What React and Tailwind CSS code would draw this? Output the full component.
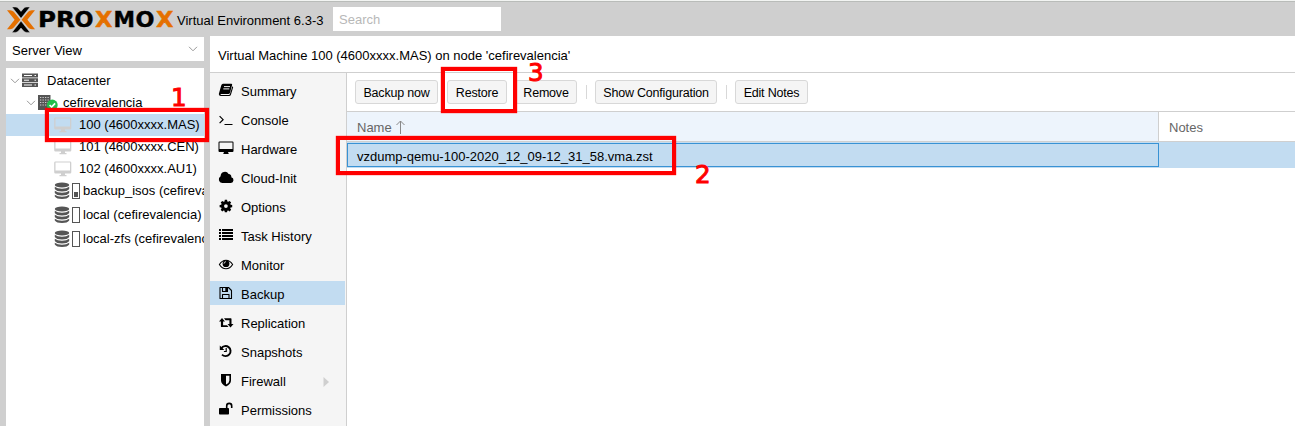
import React from "react";

function Glyph({ children, className = "" }) {
  return (
    <svg viewBox="0 0 16 14" className={"h-3.5 w-4 shrink-0 overflow-visible " + className} fill="currentColor">
      {children}
    </svg>
  );
}

const icons = {
  book: (
    <Glyph>
      <path d="M5 .8h8.200q1.300 0 .9 1.300L12 9.800q-.4 1.200-1.600 1.200H3.300q-.8 0-.8.5 0 .6.9.6h7.400q.8 0 1.100-.8L14.300 3.600l.5-.2q.5.5.3 1.200L13 11.600q-.5 1.500-2 1.500H3.100Q1.300 13.100.9 11.400q-.2-.8.2-1.500L3.200 2.600q.5-1.800 1.800-1.800z" />
      <path d="M6 3.600h6M5.300 5.900h6" stroke="#f5f5f5" strokeWidth="1" />
    </Glyph>
  ),
  console: (
    <Glyph>
      <path d="M1.600 4.200l3.500 3.500-3.500 3.500M6.500 12.500h8" fill="none" stroke="currentColor" strokeWidth="1.200" />
    </Glyph>
  ),
  hardware: (
    <svg viewBox="0 0 16 14" className="h-3.5 w-4 shrink-0" fill="currentColor">
      <path
        fillRule="evenodd"
        d="M1.500 .500h13q1 0 1 1v8.500q0 1-1 1H10l.8 2H5.200L6 11H1.500q-1 0-1-1V1.500q0-1 1-1zM1.500 1.500v6.500h13V1.500z"
      />
    </svg>
  ),
  cloud: (
    <Glyph>
      <path
        transform="translate(0 .7)"
        d="M4.200 12.200A3.600 3.600 0 0 1 2.600 5.500 4.300 4.300 0 0 1 10.600 3.300a2.600 2.600 0 0 1 2.700 3.200A2.900 2.900 0 0 1 12.900 12.200z"
      />
    </Glyph>
  ),
  gear: (
    <Glyph>
      <path
        fillRule="evenodd"
        d="M6.800.8h2.400l.3 1.700 1 .4 1.400-1 1.700 1.700-1 1.400.4 1 1.700.3v2.400l-1.700.3-.4 1 1 1.400-1.700 1.700-1.400-1-1 .4-.3 1.400H6.800l-.3-1.400-1-.4-1.400 1-1.700-1.700 1-1.400-.4-1-1.700-.3V6.300L3 6l.4-1-1-1.400L4.100 1.900l1.400 1 1-.4zM8 5.400a2 2 0 1 0 0 4 2 2 0 0 0 0-4z"
        transform="translate(.4 .1) scale(.94)"
      />
    </Glyph>
  ),
  list: (
    <Glyph>
      <path d="M1 1h2v2H1zM4 1h11v2H4zM1 4h2v2H1zM4 4h11v2H4zM1 7h2v2H1zM4 7h11v2H4zM1 10h2v2H1zM4 10h11v2H4z" />
    </Glyph>
  ),
  eye: (
    <Glyph>
      <g transform="translate(0 .5)">
        <path d="M1.400 7Q4 2.700 8 2.700T14.600 7Q12 11.300 8 11.300T1.400 7z" fill="none" stroke="currentColor" strokeWidth="1.100" />
        <circle cx="8" cy="6.200" r="3.400" />
        <path d="M6 6.200Q6 4.200 8 4.200" fill="none" stroke="#f5f5f5" strokeWidth=".8" />
      </g>
    </Glyph>
  ),
  floppy: (
    <Glyph>
      <path d="M2 1.500h8.500l3 3v8H2zM4.500 12.500V8.500h6.500V12.500M4.500 1.500v4h5v-4" fill="none" stroke="currentColor" strokeWidth="1.100" strokeLinejoin="round" />
      <path d="M7.300 2h1.700v3H7.300z" />
    </Glyph>
  ),
  retweet: (
    <Glyph>
      <path d="M4 3L7 6.500H5.100v3.700h3.900l1.500 1.900H3.500q-.6 0-.6-.6v-5H1zM12.500 12.600L9.500 9h1.900V5.200H7.500L6 3.300h6.900q.6 0 .6.600V9h2z" />
    </Glyph>
  ),
  history: (
    <Glyph>
      <g transform="translate(0 .6)">
        <path d="M3.400 3.700A5 5 0 1 1 4 10" fill="none" stroke="currentColor" strokeWidth="1.900" />
        <path d="M1.800.8v4.500h4.500zM7.600 3.500h1.200v4H5.900V6.300h1.700z" />
      </g>
    </Glyph>
  ),
  shield: (
    <Glyph>
      <path
        fillRule="evenodd"
        transform="translate(0 .6)"
        d="M3 .5h10v6.400q0 3.700-5 6-5-2.300-5-6zM8 2.200v8.800q3.400-1.900 3.400-4.200V2.200z"
      />
    </Glyph>
  ),
  unlock: (
    <Glyph>
      <path d="M1.800 6h8.400q.8 0 .8.800v4.900q0 .8-.8.800H1.800q-.8 0-.8-.8V6.800q0-.8.800-.8z" />
      <path d="M8.700 6.500V3.900a2.500 2.500 0 0 1 5 0V6" fill="none" stroke="currentColor" strokeWidth="1.600" />
    </Glyph>
  ),
};

const menu = [
  ["Summary", "book"],
  ["Console", "console"],
  ["Hardware", "hardware"],
  ["Cloud-Init", "cloud"],
  ["Options", "gear"],
  ["Task History", "list"],
  ["Monitor", "eye"],
  ["Backup", "floppy"],
  ["Replication", "retweet"],
  ["Snapshots", "history"],
  ["Firewall", "shield"],
  ["Permissions", "unlock"],
];

const wordmark = [
  ["P", 31, 18],
  ["R", 49, 19],
  ["O", 67.500, 19],
  ["X", 88, 17.500],
  ["M", 106.500, 21.500],
  ["O", 128.500, 19],
  ["X", 149, 17.500],
];

function Logo() {
  return (
    <svg viewBox="0 0 168 26" className="h-[26px] w-[168px] shrink-0 overflow-visible">
      <path d="M0 3.200h3.200q2.200 0 3.600 1.600l6.600 7.900-6.600 7.900q-1.400 1.600-3.600 1.600H0l7.600-9.500z" fill="#e57000" />
      <path d="M28 3.200h-3.200q-2.200 0-3.600 1.600l-6.600 7.900 6.600 7.900q1.400 1.600 3.600 1.600H28l-7.600-9.500z" fill="#e57000" />
      <path
        d="M5 0h3.200q2 0 3.200 1.400L14 4.400l2.600-3Q17.800 0 19.800 0H23L14 11.300zM5 25.400h3.200q2 0 3.200-1.400L14 21l2.600 3q1.200 1.400 3.200 1.400H23L14 14.100z"
        fill="#000"
        stroke="#cfcfcf"
        strokeWidth=".5"
      />
      {wordmark.map(([letter, x, advance]) => (
        <text
          key={x}
          x={x}
          y="19.800"
          textLength={advance}
          lengthAdjust="spacingAndGlyphs"
          fill={letter === "X" ? "#e57000" : "#000"}
          stroke={letter === "X" ? "#e57000" : "#000"}
          strokeWidth=".4"
          className="font-['DejaVu_Sans'] text-[20.500px] font-bold"
        >
          {letter}
        </text>
      ))}
    </svg>
  );
}

function Chevron({ className = "" }) {
  return (
    <svg viewBox="0 0 10 6" className={"h-1.5 w-2.5 shrink-0 " + className} fill="none" stroke="#999">
      <path d="M1 .8l4 4 4-4" />
    </svg>
  );
}

function Monitor() {
  return (
    <svg viewBox="0 0 18 16" className="mb-px h-4 w-[18px] shrink-0">
      <path
        fillRule="evenodd"
        fill="#cfcfcf"
        d="M1.500 .500h14.500q1.300 0 1.300 1.300v9.400q0 1.300-1.300 1.300h-5v1.500h1.500V15.300h-7v-1.300H7V12.500H1.500Q.2 12.500 .2 11.200V1.800Q.2 .5 1.500 .5zM1.500 1.600v7.900h14.500V1.600z"
      />
    </svg>
  );
}

function Storage({ used }) {
  return (
    <svg viewBox="0 0 26 18" className="mb-[3px] h-[18px] w-[26px] shrink-0 overflow-visible">
      <g fill="#555" transform="translate(0 -.6)">
        <ellipse cx="8" cy="3.500" rx="7.200" ry="2.500" />
        <path d="M.8 5.300q2.500 2 7.200 2t7.200-2v2.200q-1.700 2.500-7.200 2.500T.8 7.500zM.8 9.300q2.500 2 7.200 2t7.200-2v2.200q-1.700 2.500-7.200 2.500T.8 11.500zM.8 13.300q2.500 2 7.200 2t7.200-2v1.700q-1.700 2.500-7.200 2.500T.8 15z" />
      </g>
      <rect x="18.500" y="1.500" width="7" height="15" fill="#fff" stroke="#555" />
      {used && <rect x="20" y="10" width="4" height="5" fill="#555" />}
    </svg>
  );
}

function Button({ children, className = "" }) {
  return (
    <button
      className={
        "flex h-6 shrink-0 items-center justify-center rounded-[3px] border border-[#d8d8d8] bg-[#f5f5f5] pt-0.5 text-[12.500px] tracking-[-0.2px] whitespace-nowrap " +
        className
      }
    >
      {children}
    </button>
  );
}

function Callout({ children, className }) {
  return (
    <div
      className={
        "absolute font-['DejaVu_Sans'] text-[24.500px] leading-[30px] text-[#f00] [-webkit-text-stroke:1px_#f00] " + className
      }
    >
      {children}
    </div>
  );
}

export default function App() {
  return (
    <div className="relative flex h-[426px] w-[1295px] flex-col overflow-hidden bg-[#cfcfcf] font-['Liberation_Sans',sans-serif] text-[13px] leading-4 text-black">
      <header className="flex h-9 shrink-0 items-center border-t border-[#f2f4f2] pt-0.5 pl-[7px] shadow-[inset_0_1px_0_#b9bcb9]">
        <Logo />
        <span className="ml-0.5 w-[156px] whitespace-nowrap pt-0.5">Virtual Environment 6.3-3</span>
        <div className="mt-[-2px] flex h-6 w-[168px] items-center bg-white pt-[3px] pl-1.5 text-[#b8b8b8]">Search</div>
      </header>

      <div className="flex min-h-0 flex-1">
        <aside className="flex w-[210px] shrink-0 flex-col pt-px pr-1.5 pl-1.5">
          <div className="flex h-6 shrink-0 items-center justify-between bg-white pt-[3px] pr-1.5 pl-1.5">
            <span>Server View</span>
            <Chevron className="mb-1" />
          </div>
          <div className="mt-[7px] flex-1 overflow-hidden bg-white pt-0.5 whitespace-nowrap">
            <div className="flex h-[22px] items-center pl-1">
              <Chevron />
              <svg viewBox="0 0 16 14" className="mb-0.5 ml-0.5 h-3.5 w-4 shrink-0">
                <path d="M0 .5h16v4H0zM0 5.200h16v4H0zM0 10h16v4H0z" fill="#555" />
                <path d="M2 2.500h8M2 7.200h5M2 12h8M12.500 2.500h1.500M12.500 7.200h1.500M12.500 12h1.500" stroke="#fff" />
              </svg>
              <span className="ml-[9px]">Datacenter</span>
            </div>
            <div className="flex h-[22px] items-center pl-5">
              <Chevron />
              <svg viewBox="0 0 20 18" className="ml-0.5 h-[18px] w-5 shrink-0">
                <path d="M0 1h12.500v15H0z" fill="#555" />
                <path d="M2 3.500h9M2 6h9M2 8.500h9M2 11h9" stroke="#ccc" strokeDasharray="1.300 1.200" />
                <circle cx="14.300" cy="11" r="5.400" fill="#21bf4b" />
                <path d="M11.600 11l2 2 3.500-3.700" fill="none" stroke="#fff" strokeWidth="1.700" />
              </svg>
              <span className="ml-[5px]">cefirevalencia</span>
            </div>
            <div className="flex h-[22px] items-center bg-[#c2dcf1] pl-12">
              <Monitor />
              <span className="ml-[7px]">100 (4600xxxx.MAS)</span>
            </div>
            <div className="flex h-[22px] items-center pl-12">
              <Monitor />
              <span className="ml-[7px]">101 (4600xxxx.CEN)</span>
            </div>
            <div className="flex h-[22px] items-center pl-12">
              <Monitor />
              <span className="ml-[7px]">102 (4600xxxx.AU1)</span>
            </div>
            <div className="flex h-6 items-center pl-12">
              <Storage used />
              <span className="ml-[3px] pb-[3px]">backup_isos (cefirevalencia)</span>
            </div>
            <div className="flex h-6 items-center pl-12">
              <Storage />
              <span className="ml-[3px] pb-[3px]">local (cefirevalencia)</span>
            </div>
            <div className="flex h-6 items-center pl-12">
              <Storage />
              <span className="ml-[3px] pb-[3px]">local-zfs (cefirevalencia)</span>
            </div>
          </div>
        </aside>

        <main className="flex min-w-0 flex-1 flex-col bg-white">
          <div className="flex h-[37px] shrink-0 items-center border-b border-[#cfcfcf] pt-1 pl-2">
            Virtual Machine 100 (4600xxxx.MAS) on node 'cefirevalencia'
          </div>
          <div className="flex min-h-0 flex-1">
            <nav className="flex w-[137px] shrink-0 flex-col gap-[5px] overflow-hidden border-r border-[#cfcfcf] bg-[#f5f5f5] pt-[5px]">
              {menu.map(([label, icon]) => (
                <div
                  key={label}
                  className={
                    "flex h-6 w-[135px] shrink-0 items-center pl-2 " + (label === "Backup" ? "bg-[#c2dcf1]" : "")
                  }
                >
                  {icons[icon]}
                  <span className="ml-[7px] pt-1">{label}</span>
                  {label === "Firewall" && (
                    <svg viewBox="0 0 6 10" className="mt-1 mr-4 ml-auto h-2.5 w-1.5">
                      <path d="M.5 0L6 5 .5 10z" fill="#cfcfcf" />
                    </svg>
                  )}
                </div>
              ))}
            </nav>
            <section className="flex min-w-0 flex-1 flex-col">
              <div className="flex h-[39px] shrink-0 items-center border-b border-[#cfcfcf] pl-2">
                <Button className="w-[83px]">Backup now</Button>
                <Button className="ml-[9px] w-[60px]">Restore</Button>
                <Button className="ml-2 w-[62px]">Remove</Button>
                <div className="ml-[9px] h-3.5 w-px bg-[#d8d8d8]" />
                <Button className="ml-2 w-[122px]">Show Configuration</Button>
                <div className="ml-[9px] h-3.5 w-px bg-[#d8d8d8]" />
                <Button className="ml-2 w-[73px]">Edit Notes</Button>
              </div>
              <div className="flex h-[30px] shrink-0 border-b border-[#cfcfcf] text-[#666]">
                <div className="flex w-[812px] items-center border-r border-[#cfcfcf] bg-[#edf4fc] pt-0.5 pl-2.5">
                  Name
                  <svg viewBox="0 0 10 14" className="mb-0.5 ml-1 h-3.5 w-2.5" fill="none" stroke="#888">
                    <path d="M4.500 14V1M.5 5L4.500 1l4 4" />
                  </svg>
                </div>
                <div className="flex items-center pt-0.5 pl-2.5">Notes</div>
              </div>
              <div className="flex h-[26px] shrink-0 bg-[#c2dcf1] py-px">
                <div className="flex w-[812px] items-center border border-[#3892d4] pt-1 pl-[9px]">
                  vzdump-qemu-100-2020_12_09-12_31_58.vma.zst
                </div>
              </div>
            </section>
          </div>
        </main>
      </div>

      <div className="absolute top-[108px] left-[45px] h-[34px] w-[164px] border-4 border-[#f00] shadow-[0_0_1px_#f00]" />
      <div className="absolute top-[136px] left-[336px] h-[39px] w-[340px] border-4 border-[#f00] shadow-[0_0_1px_#f00]" />
      <div className="absolute top-[67px] left-[441px] h-[46px] w-[76px] border-4 border-[#f00] shadow-[0_0_1px_#f00]" />
      <Callout className="top-[83px] left-[171px]">1</Callout>
      <Callout className="top-[160px] left-[695px]">2</Callout>
      <Callout className="top-[58px] left-[528px]">3</Callout>
    </div>
  );
}
